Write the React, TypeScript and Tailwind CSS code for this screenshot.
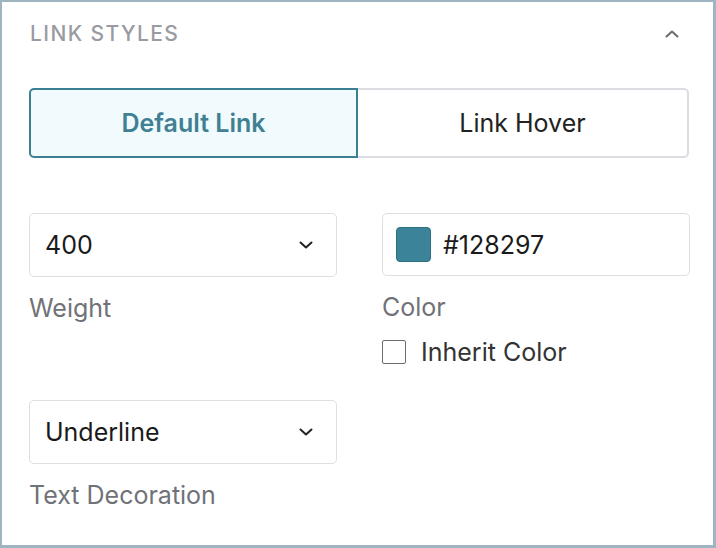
import * as React from 'react';

function Chevron({ up = false }: { up?: boolean }) {
  return (
    <svg width="16" height="10" viewBox="0 0 16 10" fill="none" className={up ? 'rotate-180' : ''}>
      <path d="M2.5 2.5L8 7.5L13.5 2.5" stroke="currentColor" strokeWidth="2" strokeLinecap="round" strokeLinejoin="round" />
    </svg>
  );
}

function SelectBox({ value }: { value: string }) {
  return (
    <div className="h-[64px] w-full rounded-[5px] border border-[#dedfe3] bg-white pl-[15px] pr-[22px] flex items-center justify-between">
      <span className="text-[25px] leading-[32px] text-[#1a1a1a]">{value}</span>
      <span className="text-[#222]">
        <Chevron />
      </span>
    </div>
  );
}

export default function App() {
  return (
    <div
      className="w-[716px] h-[548px] bg-white border-l-2 border-t-2 border-r-[3px] border-b-[3px] border-[#9fb6c2] pl-[27px] pr-[23px] overflow-hidden"
      style={{ fontFamily: 'Inter, "Noto Sans", sans-serif' }}
    >
      {/* Header */}
      <div className="h-[64px] flex items-center justify-between pr-[10px]">
        <span className="text-[21px] font-medium tracking-[1.4px] text-[#9a9ba1] pl-[1px]">LINK STYLES</span>
        <span className="text-[#6b6c70]">
          <Chevron up />
        </span>
      </div>

      {/* Tabs */}
      <div className="mt-[22px] flex h-[70px] w-[660px]">
        <button className="w-[329px] h-full pt-[2px] rounded-l-[5px] border-2 border-[#3d7f92] bg-[#f1fafd] text-[25px] font-semibold text-[#3f8093]">
          Default Link
        </button>
        <button className="flex-1 h-full pt-[2px] rounded-r-[5px] border-2 border-l-0 border-[#dcdde3] bg-white text-[25px] text-[#222]">
          Link Hover
        </button>
      </div>

      {/* Fields */}
      <div className="mt-[55px] grid grid-cols-[308px_308px] gap-x-[45px]">
        <div>
          <SelectBox value="400" />
          <div className="mt-[15px] text-[25px] text-[#707278] leading-[32px]">Weight</div>
        </div>
        <div>
          <div className="h-[63px] w-full rounded-[5px] border border-[#dedfe3] bg-white pl-[13px] flex items-center gap-[12px]">
            <span className="w-[35px] h-[35px] rounded-[4px] bg-[#3a8398] border border-[#2f6f80]" />
            <span className="text-[25px] leading-[32px] text-[#1a1a1a]">#128297</span>
          </div>
          <div className="mt-[15px] text-[25px] text-[#707278] leading-[32px]">Color</div>
          <label className="mt-[13px] flex items-center gap-[15px]">
            <span className="w-[24px] h-[24px] border-[1.5px] border-[#6b6b6b] rounded-[2px] bg-white" />
            <span className="text-[25px] text-[#333] leading-[32px]">Inherit Color</span>
          </label>
        </div>
        <div className="mt-[32px]">
          <SelectBox value="Underline" />
          <div className="mt-[15px] text-[25px] text-[#707278] leading-[32px]">Text Decoration</div>
        </div>
      </div>
    </div>
  );
}
